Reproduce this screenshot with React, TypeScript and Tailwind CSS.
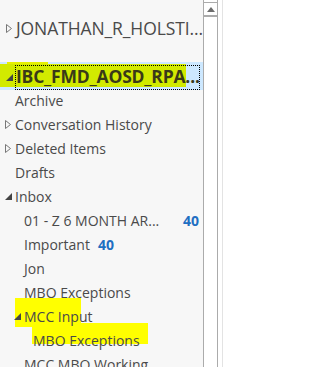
import React from "react";

const font = { fontFamily: '"Open Sans", "Noto Sans", sans-serif' };

function TriOpen() {
  return (
    <svg width="7" height="7" viewBox="0 0 7 7" className="shrink-0">
      <path d="M7 0 L7 7 L0 7 Z" fill="#444" />
    </svg>
  );
}
function TriClosed() {
  return (
    <svg width="6" height="9" viewBox="0 0 6 9" className="shrink-0">
      <path d="M0.5 0.5 L5.5 4.5 L0.5 8.5 Z" fill="none" stroke="#777" strokeWidth="1" />
    </svg>
  );
}

type Row = { label: string; indent: number; tri?: "open" | "closed"; count?: string; countRight?: boolean };

const rows: Row[] = [
  { label: "Archive", indent: 15 },
  { label: "Conversation History", indent: 15, tri: "closed" },
  { label: "Deleted Items", indent: 15, tri: "closed" },
  { label: "Drafts", indent: 15 },
  { label: "Inbox", indent: 15, tri: "open" },
  { label: "01 - Z 6 MONTH AR...", indent: 24, count: "40", countRight: true },
  { label: "Important", indent: 24, count: "40" },
  { label: "Jon", indent: 24 },
  { label: "MBO Exceptions", indent: 24 },
  { label: "MCC Input", indent: 24, tri: "open" },
  { label: "MBO Exceptions", indent: 33 },
  { label: "MCC MBO Working", indent: 24 },
];

export default function App() {
  return (
    <div className="relative flex w-[316px] h-[367px] overflow-hidden bg-white text-[#4a4a4a]" style={font}>
      <div className="relative w-[203px] h-full bg-[#f7f7f7] shrink-0">
        {/* highlighter marks (behind text) */}
        <div className="absolute left-[15px] top-[298px] w-[66px] h-[29px] bg-[#ffff00]" />
        <div className="absolute left-[32px] top-[323px] w-[116px] h-[21px] bg-[#ffff00]" />

        <div className="relative flex items-center h-[24px] mt-[16px] text-[17.5px] whitespace-nowrap">
          <div className="w-[16px] shrink-0 flex justify-center pl-[1px]">
            <TriClosed />
          </div>
          <span className="tracking-[-0.1px]">JONATHAN_R_HOLSTI...</span>
        </div>
        <div className="relative mt-[22px] h-[28px] bg-[#cde8ff]">
          <div className="absolute left-[7px] top-0 w-[41px] h-[3px] bg-[#e6f000]" />
          <div className="absolute left-0 top-[2px] w-[186px] h-[23px] bg-[#d2ea00]" />
          <div className="absolute left-[15px] top-[3px] right-[3px] bottom-0 border border-dotted border-black" />
          <div className="relative flex items-center h-full text-[17.5px] font-bold whitespace-nowrap text-[#3a3a18]">
            <div className="w-[16px] shrink-0 flex justify-center pl-[2px] pt-[2px]">
              <TriOpen />
            </div>
            <span className="pt-[1px] tracking-[-0.2px]">IBC_FMD_AOSD_RPA...</span>
          </div>
        </div>
        <div className="relative flex flex-col -mt-[2px]">
          {rows.map((r, i) => (
            <div key={i} className="relative flex items-center h-[24px] text-[14px] whitespace-nowrap">
              <div className="relative flex items-center w-full" style={{ paddingLeft: r.indent }}>
                {r.tri && (
                  <div className="absolute flex justify-center" style={{ left: r.indent - 12, width: 10 }}>
                    {r.tri === "open" ? <TriOpen /> : <TriClosed />}
                  </div>
                )}
                <span>{r.label}</span>
                {r.count && !r.countRight && (
                  <span className="ml-[8px] font-bold text-[#1f6fc2]">{r.count}</span>
                )}
                {r.count && r.countRight && (
                  <span className="ml-auto mr-[4px] font-bold text-[#1f6fc2]">{r.count}</span>
                )}
              </div>
            </div>
          ))}
        </div>
      </div>
      <div className="w-[15px] h-full border-x border-[#ababab] bg-white flex flex-col shrink-0">
        <div className="mt-[2px] border-t border-[#ababab] h-[15px] border-b-2 flex items-center justify-center">
          <svg width="8" height="5" viewBox="0 0 8 5">
            <path d="M0 5 L4 0 L8 5 Z" fill="#6d6d6d" />
          </svg>
        </div>
      </div>
      <div className="w-[4px] h-full bg-white" />
      <div className="w-[1px] h-full bg-[#e3e3e3]" />
      <div className="flex-1 h-full bg-white" />
    </div>
  );
}
